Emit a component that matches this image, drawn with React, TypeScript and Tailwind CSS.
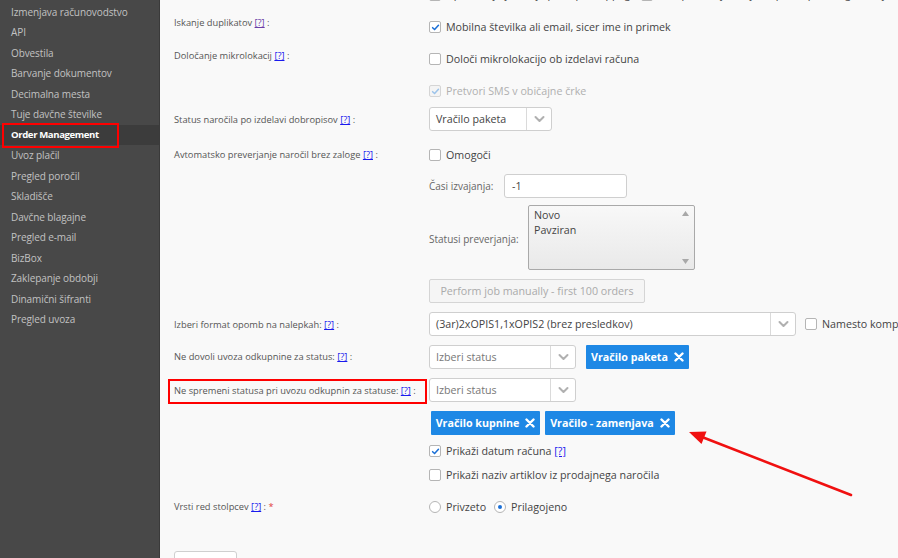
import React from "react";

const sideItems = [
  "Izmenjava računovodstvo",
  "API",
  "Obvestila",
  "Barvanje dokumentov",
  "Decimalna mesta",
  "Tuje davčne številke",
  "Order Management",
  "Uvoz plačil",
  "Pregled poročil",
  "Skladišče",
  "Davčne blagajne",
  "Pregled e-mail",
  "BizBox",
  "Zaklepanje obdobji",
  "Dinamični šifranti",
  "Pregled uvoza",
];

function Check({ checked = false, disabled = false }: { checked?: boolean; disabled?: boolean }) {
  return (
    <span
      className={`inline-flex items-center justify-center w-[12px] h-[12px] rounded-[2px] border shrink-0 ${
        disabled ? "border-[#d5d5d5] bg-[#f4f4f4]" : "border-[#b5b5b5] bg-white"
      }`}
    >
      {checked && (
        <svg width="9" height="9" viewBox="0 0 10 10">
          <path
            d="M1.8 5.2 L4 7.3 L8.3 2.6"
            fill="none"
            stroke={disabled ? "#9cc3ea" : "#1a6fd6"}
            strokeWidth="1.7"
            strokeLinecap="round"
            strokeLinejoin="round"
          />
        </svg>
      )}
    </span>
  );
}

function Radio({ checked = false }: { checked?: boolean }) {
  return (
    <span className="inline-flex items-center justify-center w-[12px] h-[12px] rounded-full border border-[#b5b5b5] bg-white shrink-0">
      {checked && <span className="w-[4px] h-[4px] rounded-full bg-[#1a6fd6]" />}
    </span>
  );
}

function Chevron() {
  return (
    <svg width="11" height="8" viewBox="0 0 11 8">
      <path d="M1.5 2 L5.5 6 L9.5 2" fill="none" stroke="#b0b0b0" strokeWidth="2" strokeLinecap="round" strokeLinejoin="round" />
    </svg>
  );
}

function XIcon() {
  return (
    <svg width="10" height="10" viewBox="0 0 10 10">
      <path d="M1.5 1.5 L8.5 8.5 M8.5 1.5 L1.5 8.5" stroke="#fff" strokeWidth="2.4" strokeLinecap="round" />
    </svg>
  );
}

function Q({ visited = false }: { visited?: boolean }) {
  return <span className={`underline ${visited ? "text-[#6b3fa8]" : "text-[#1a1aee]"}`}>[?]</span>;
}

function Label({ text, visited = false, star = false }: { text: string; visited?: boolean; star?: boolean }) {
  return (
    <span>
      {text} <Q visited={visited} /> :{star && <span className="text-[#e03c3c]"> *</span>}
    </span>
  );
}

function Select({ text, width, divider, placeholder = false }: { text: string; width: string; divider: string; placeholder?: boolean }) {
  return (
    <div className={`flex h-[24px] ${width} shrink-0 border border-[#cfcfcf] rounded-[3px] bg-white`}>
      <div className={`flex items-center pl-[6px] whitespace-nowrap ${divider} border-r border-[#dadada] ${placeholder ? "text-[#777]" : "text-[#444]"}`}>{text}</div>
      <div className="flex-1 flex items-center justify-center">
        <Chevron />
      </div>
    </div>
  );
}

function Tag({ text, w }: { text: string; w: string }) {
  return (
    <div className={`flex items-center justify-center gap-[6px] h-[24px] ${w} shrink-0 bg-[#1e88e5] text-white font-bold rounded-[1px]`}>
      <span>{text}</span>
      <XIcon />
    </div>
  );
}

export default function App() {
  return (
    <div className="relative flex w-[898px] h-[558px] overflow-hidden font-['Open_Sans',sans-serif] bg-[#f9f9f9]">
      {/* Sidebar */}
      <div className="relative w-[160px] h-full bg-[#484848] border-r border-[#3a3a3a] shrink-0 pt-[1.75px]">
        {sideItems.map((s) => {
          const active = s === "Order Management";
          return (
            <div
              key={s}
              className={`h-[20.5px] flex items-center pl-[11px] whitespace-nowrap ${
                active ? "bg-[#3c3c3c] text-white font-bold text-[9.6px] tracking-[-0.4px]" : "text-[#c2c2c2] text-[10px] tracking-[-0.1px]"
              }`}
            >
              {s}
            </div>
          );
        })}
        <div className="absolute left-[2px] top-[123px] w-[117px] h-[25px] border-2 border-[#ff0000]" />
      </div>

      {/* Main */}
      <div className="relative flex-1 h-full overflow-hidden pl-[14px] text-[#555]">
        <div className="flex flex-col text-[9.3px]">
          {/* cut row */}
          <div className="flex h-[20px] -mt-[10px]">
            <div className="w-[255px] shrink-0" />
            <div className="flex items-center text-[10.7px] text-[#444] -mt-[11px] whitespace-nowrap">
              <Check />
              <span className="ml-[5px] w-[195px] shrink-0 overflow-hidden">Upoštevaj ujemanje po kupcu (app) g</span>
              <Check />
              <span className="ml-[5px]">Ne upoštevaj zadnjih zapisov (po nalogu_izdaje) ...</span>
            </div>
          </div>

          {/* Iskanje */}
          <div className="flex h-[34px]">
            <div className="w-[255px] shrink-0 pt-[6px] leading-[14px]">
              <Label text="Iskanje duplikatov" visited />
            </div>
            <div className="pt-[8px] h-[18px] flex items-center gap-[5px] text-[10.7px] text-[#444] box-content whitespace-nowrap">
              <Check checked />
              <span>Mobilna številka ali email, sicer ime in primek</span>
            </div>
          </div>

          {/* Določanje */}
          <div className="flex h-[32px]">
            <div className="w-[255px] shrink-0 pt-[5px] leading-[14px]">
              <Label text="Določanje mikrolokacij" />
            </div>
            <div className="pt-[6px] h-[18px] flex items-center gap-[5px] text-[10.7px] text-[#444] box-content whitespace-nowrap">
              <Check />
              <span>Določi mikrolokacijo ob izdelavi računa</span>
            </div>
          </div>

          {/* Pretvori */}
          <div className="flex h-[29px]">
            <div className="w-[255px] shrink-0" />
            <div className="pt-[6px] h-[18px] flex items-center gap-[5px] text-[10.7px] text-[#b0b0b0] box-content whitespace-nowrap">
              <Check checked disabled />
              <span>Pretvori SMS v običajne črke</span>
            </div>
          </div>

          {/* Status naročila */}
          <div className="flex h-[35px]">
            <div className="w-[255px] shrink-0 pt-[8px] leading-[14px]">
              <Label text="Status naročila po izdelavi dobropisov" />
            </div>
            <div className="pt-[2px] text-[10.7px]">
              <Select text="Vračilo paketa" width="w-[123px]" divider="w-[97px]" />
            </div>
          </div>

          {/* Avtomatsko */}
          <div className="flex h-[28px]">
            <div className="w-[255px] shrink-0 pt-[8px] leading-[14px]">
              <Label text="Avtomatsko preverjanje naročil brez zaloge" />
            </div>
            <div className="pt-[6px] h-[18px] flex items-center gap-[5px] text-[10.7px] text-[#444] box-content">
              <Check />
              <span>Omogoči</span>
            </div>
          </div>

          {/* Časi */}
          <div className="flex h-[32px]">
            <div className="w-[255px] shrink-0" />
            <div className="pt-[4px] flex items-center text-[10.7px]">
              <span className="w-[75px] text-[#666] text-[10px]">Časi izvajanja:</span>
              <div className="w-[123px] h-[24px] border border-[#cfcfcf] rounded-[3px] bg-white flex items-center pl-[7px] text-[#444]">-1</div>
            </div>
          </div>

          {/* Statusi */}
          <div className="flex h-[74px]">
            <div className="w-[255px] shrink-0" />
            <div className="pt-[5px] flex items-center text-[10.7px] h-[65px] box-content">
              <span className="w-[99px] text-[#666] text-[10px] pt-[4px]">Statusi preverjanja:</span>
              <div className="relative w-[167px] h-[65px] border border-[#a9a9a9] rounded-[2px] bg-gradient-to-b from-[#f8f8f8] to-[#e9e9e9] pl-[5px] pt-[2px] leading-[15px] text-[#444]">
                <div>Novo</div>
                <div>Pavziran</div>
                <svg className="absolute right-[5px] top-[5px]" width="7" height="5" viewBox="0 0 7 5">
                  <path d="M0 5 L3.5 0 L7 5 Z" fill="#a8a8a8" />
                </svg>
                <svg className="absolute right-[5px] bottom-[5px]" width="7" height="5" viewBox="0 0 7 5">
                  <path d="M0 0 L3.5 5 L7 0 Z" fill="#a8a8a8" />
                </svg>
              </div>
            </div>
          </div>

          {/* Perform button */}
          <div className="flex h-[34px]">
            <div className="w-[255px] shrink-0" />
            <div className="pt-[5px]">
              <div className="w-[216px] h-[24px] border border-[#d5d5d5] rounded-[2px] bg-[#f5f5f5] flex items-center justify-center text-[10.7px] text-[#aaa]">
                Perform job manually - first 100 orders
              </div>
            </div>
          </div>

          {/* Izberi format */}
          <div className="flex h-[33px]">
            <div className="w-[255px] shrink-0 pt-[10px] leading-[14px]">
              <Label text="Izberi format opomb na nalepkah:" />
            </div>
            <div className="pt-[4px] flex items-start text-[10.7px]">
              <Select text="(3ar)2xOPIS1,1xOPIS2 (brez presledkov)" width="w-[367px]" divider="w-[341px]" />
              <div className="ml-[9px] h-[24px] flex items-center gap-[5px] text-[#444] whitespace-nowrap">
                <Check />
                <span>Namesto komp</span>
              </div>
            </div>
          </div>

          {/* Ne dovoli */}
          <div className="flex h-[33px]">
            <div className="w-[255px] shrink-0 pt-[9px] leading-[14px]">
              <Label text="Ne dovoli uvoza odkupnine za status:" />
            </div>
            <div className="pt-[4px] flex items-start gap-[10px] text-[10.7px]">
              <Select text="Izberi status" width="w-[147px]" divider="w-[121px]" placeholder />
              <Tag text="Vračilo paketa" w="w-[103px]" />
            </div>
          </div>

          {/* Ne spremeni */}
          <div className="flex h-[33px]">
            <div className="relative w-[255px] shrink-0 pt-[10px] leading-[14px]">
              <Label text="Ne spremeni statusa pri uvozu odkupnin za statuse:" />
              <div className="absolute -left-[6px] top-[5px] w-[259px] h-[25px] border-2 border-[#ff0000]" />
            </div>
            <div className="pt-[4px] text-[10.7px]">
              <Select text="Izberi status" width="w-[147px]" divider="w-[121px]" placeholder />
            </div>
          </div>

          {/* Tags */}
          <div className="flex h-[33px]">
            <div className="w-[255px] shrink-0" />
            <div className="pt-[4px] pl-[2px] flex gap-[5px] text-[10.7px]">
              <Tag text="Vračilo kupnine" w="w-[109px]" />
              <Tag text="Vračilo - zamenjava" w="w-[130px]" />
            </div>
          </div>

          {/* Prikaži datum */}
          <div className="flex h-[23px]">
            <div className="w-[255px] shrink-0" />
            <div className="pt-[2px] h-[18px] flex items-center gap-[5px] text-[10.7px] text-[#444] box-content">
              <Check checked />
              <span>
                Prikaži datum računa <Q />
              </span>
            </div>
          </div>

          {/* Prikaži naziv */}
          <div className="flex h-[27px]">
            <div className="w-[255px] shrink-0" />
            <div className="pt-[3px] h-[18px] flex items-center gap-[5px] text-[10.7px] text-[#444] box-content">
              <Check />
              <span>Prikaži naziv artiklov iz prodajnega naročila</span>
            </div>
          </div>

          {/* Vrsti red */}
          <div className="flex h-[50px]">
            <div className="w-[255px] shrink-0 pt-[10px] leading-[14px]">
              <Label text="Vrsti red stolpcev" star />
            </div>
            <div className="pt-[8px] h-[18px] flex items-center text-[10.7px] text-[#444] box-content">
              <Radio />
              <span className="ml-[5px]">Privzeto</span>
              <span className="ml-[8px] flex">
                <Radio checked />
              </span>
              <span className="ml-[5px]">Prilagojeno</span>
            </div>
          </div>

          {/* bottom button */}
          <div className="mt-[11px] w-[63px] h-[26px] border border-[#cfcfcf] rounded-[3px] bg-white" />
        </div>
      </div>

      {/* Red arrow overlay */}
      <svg className="absolute left-0 top-0 pointer-events-none" width="898" height="558" viewBox="0 0 898 558">
        <line x1="851" y1="495" x2="702" y2="437" stroke="#f01010" strokeWidth="2.6" strokeLinecap="round" />
        <polygon points="689,432 706.5,431.5 701.5,444" fill="#f01010" />
      </svg>
    </div>
  );
}
